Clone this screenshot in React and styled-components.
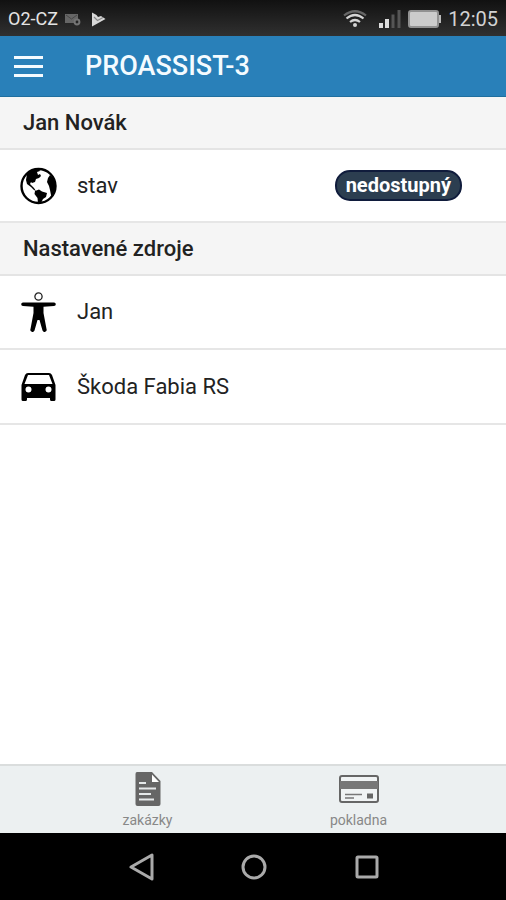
import React from "react";
import styled, { createGlobalStyle } from "styled-components";

const GlobalStyle = createGlobalStyle`
  *, *::before, *::after { box-sizing: border-box; }
  body { margin: 0; background: #fff; }
  h1, h2, ul { margin: 0; padding: 0; }
  button { border: 0; padding: 0; background: none; font: inherit; color: inherit; cursor: pointer; }
  svg { display: block; flex: none; }
`;

const Screen = styled.div`
  display: flex;
  flex-direction: column;
  min-height: 100vh;
  font-family: Roboto, "Noto Sans", sans-serif;
  color: #222;
`;

const StatusBar = styled.div`
  display: flex;
  align-items: center;
  justify-content: space-between;
  height: 36px;
  padding: 2px 8px 0;
  background: linear-gradient(#111, #303030);
  color: #d2d2d2;
`;

const StatusGroup = styled.div`
  display: flex;
  align-items: center;
  gap: ${(p) => p.$gap}px;
`;

const Carrier = styled.span`
  font-size: 18px;
  line-height: 20px;
  color: #e4e4e4;
`;

const Clock = styled.time`
  font-size: 20px;
  line-height: 20px;
`;

const Header = styled.header`
  display: flex;
  align-items: center;
  gap: 42px;
  height: 61px;
  padding: 0 14px;
  background: #2980b9;
  border-bottom: 1px solid #1f6f9f;
  color: #f4fbff;
`;

const MenuButton = styled.button`
  display: flex;
`;

const Title = styled.h1`
  font-size: 27px;
  line-height: 32px;
  font-weight: 500;
`;

const Content = styled.main`
  flex: 1;
`;

const SectionTitle = styled.h2`
  padding: 12px 23px 11px;
  border-bottom: 2px solid #e4e4e4;
  background: #f5f5f5;
  font-size: 22px;
  line-height: 28px;
  font-weight: 500;
`;

const List = styled.ul`
  list-style: none;
`;

const Row = styled.li`
  display: flex;
  align-items: center;
  gap: 20px;
  height: ${(p) => p.$height}px;
  padding: 0 44px 0 20px;
  border-bottom: 2px solid #e6e6e6;
  background: #fff;
`;

const RowLabel = styled.span`
  flex: 1;
  font-size: 22px;
  line-height: 28px;
`;

const Badge = styled.span`
  padding: 0 9px;
  border: 2px solid #101c3c;
  border-radius: 15px;
  background: #2c3e50;
  color: #fff;
  font-size: 20px;
  line-height: 27px;
  font-weight: 700;
`;

const TabBar = styled.nav`
  display: flex;
  height: 69px;
  padding: 0 42px;
  border-top: 2px solid #dadddd;
  background: #ecf0f1;
`;

const Tab = styled.button`
  display: flex;
  flex: 1;
  flex-direction: column;
  align-items: center;
  gap: 2px;
  padding-top: 4px;
  color: #666;
`;

const TabLabel = styled.span`
  font-size: 14px;
  line-height: 20px;
  color: #888;
`;

const SystemNav = styled.nav`
  display: flex;
  height: 67px;
  padding: 0 83px 0 86px;
  background: #000;
`;

const SystemButton = styled.button`
  display: flex;
  flex: 1;
  align-items: center;
  justify-content: center;
`;

const MailIcon = () => (
  <svg width="16" height="13" viewBox="0 0 16 13" aria-hidden="true">
    <path d="M0 1h13v5a4 4 0 0 0-4 4H0z" fill="#666" />
    <path d="M1 2l5.500 4L12 2" fill="none" stroke="#484848" />
    <circle cx="12" cy="9" r="2.400" fill="none" stroke="#747474" strokeWidth="2" />
  </svg>
);

const PlayCheckIcon = () => (
  <svg width="15" height="15" viewBox="0 0 15 15" aria-hidden="true">
    <path d="M1 .5L5.500 3 7 5l3-1 4.500 3L1 14.500z" fill="#d8d8d8" />
    <path d="M3 5l3.500 3.500L12 5.500" fill="none" stroke="#888" strokeWidth="1.200" />
  </svg>
);

const WifiIcon = () => (
  <svg width="24" height="18" viewBox="0 0 24 18" fill="none" strokeWidth="2.200" aria-hidden="true">
    <path d="M1 5.500Q12-3 23 5.500" stroke="#666" />
    <path d="M3.500 8.500Q12 1.500 20.500 8.500M7 12q5-4 10 0" stroke="#d4d4d4" />
    <circle cx="12" cy="15" r="2" fill="#d4d4d4" />
  </svg>
);

const SignalIcon = () => (
  <svg width="22" height="18" viewBox="0 0 22 18" aria-hidden="true">
    <path d="M0 13h4v5H0zM6 9h4v9H6z" fill="#dedede" />
    <path d="M12.500 4.500h3V18h-3zM18.500 0h3v18h-3z" fill="#555" />
  </svg>
);

const BatteryIcon = () => (
  <svg width="33" height="18" viewBox="0 0 33 18" aria-hidden="true">
    <rect x="1" y="1" width="29" height="16" rx="2" fill="#ccc" stroke="#929292" strokeWidth="2" />
    <path d="M31 5h2v8h-2z" fill="#bbb" />
  </svg>
);

const MenuIcon = () => (
  <svg width="29" height="21" viewBox="0 0 29 21" aria-hidden="true">
    <path d="M0 0h29v3H0zM0 9h29v3H0zM0 18h29v3H0z" fill="currentColor" />
  </svg>
);

const GlobeIcon = () => (
  <svg width="37" height="38" viewBox="0 0 37 38" aria-hidden="true">
    <circle cx="18.500" cy="19" r="17" fill="#fff" stroke="#000" strokeWidth="2.400" />
    <path d="M7 7C10 4 14 2 19 2l1 2-3 1 1 3 2-1 1 2-2 2-3 1-1 3-3 1-1-1-1 2 2 2 2 2 2 3-2-1-3-3-4-3-1-4z" />
    <path d="M30 8c5 4 7 10 5 17l-3 5-1-2-1-5-1-4-2-4 1-4z" />
    <path d="M15 24l4-1.500 3 2 5 1.500-1 4-3 2-2 4h-3l-.5-5-3-4z" />
  </svg>
);

const PersonIcon = () => (
  <svg width="37" height="40" viewBox="0 0 37 40" aria-hidden="true">
    <circle cx="18.500" cy="4.500" r="3.600" fill="none" stroke="#222" strokeWidth="1.300" />
    <path d="M3 10.500h31a1.800 1.800 0 0 1 0 3.600l-10.500.6V21l3 16a2 2 0 0 1-4 1.500L19.500 28h-2l-3 10.500a2 2 0 0 1-4-1.500l3-16v-6.300L3 14.100a1.800 1.800 0 0 1 0-3.600z" />
  </svg>
);

const CarIcon = () => (
  <svg width="37" height="32" viewBox="0 0 37 32" aria-hidden="true">
    <path
      fillRule="evenodd"
      d="M8 2h21q2 0 3 2l3.500 10v14.500q0 1.500-1.500 1.500h-2.500q-1.500 0-1.500-1.500V27H7v1.500Q7 30 5.500 30H3q-1.500 0-1.500-1.500V14L5 4q1-2 3-2zM8 4L4.500 13h28L29 4zM8.500 15.500a3 3 0 1 0 0 6 3 3 0 0 0 0-6zM28.500 15.500a3 3 0 1 0 0 6 3 3 0 0 0 0-6z"
    />
  </svg>
);

const DocumentIcon = () => (
  <svg width="26" height="38" viewBox="0 0 26 38" aria-hidden="true">
    <path d="M2 2h15l8.500 9v23q0 2-2 2h-21q-2 0-2-2V4q0-2 1.500-2z" fill="#666" />
    <path d="M17 4.500V12h7z" fill="#fff" />
    <path d="M4 13h7M4 18.500h17M4 24h12M4 29.500h15" stroke="#e5e8e9" strokeWidth="2" />
  </svg>
);

const CardIcon = () => (
  <svg width="40" height="38" viewBox="0 0 40 38" aria-hidden="true">
    <rect x="1" y="6" width="38" height="26" rx="2" fill="#f0f3f4" stroke="#666" strokeWidth="2" />
    <path d="M1 11h38v8H1z" fill="#777" />
    <path d="M6 24.500h17M6 28h9" stroke="#777" strokeWidth="1.500" />
    <path d="M28 23.500h6v5h-6z" fill="#666" />
  </svg>
);

const BackIcon = () => (
  <svg width="26" height="28" viewBox="0 0 26 28" fill="none" stroke="#aaa" strokeWidth="3" strokeLinejoin="round" aria-hidden="true">
    <path d="M23 2v24L2 14z" />
  </svg>
);

const HomeIcon = () => (
  <svg width="28" height="28" viewBox="0 0 28 28" fill="none" stroke="#aaa" strokeWidth="3" aria-hidden="true">
    <circle cx="14" cy="14" r="11" />
  </svg>
);

const RecentsIcon = () => (
  <svg width="24" height="24" viewBox="0 0 24 24" fill="none" stroke="#aaa" strokeWidth="3" aria-hidden="true">
    <rect x="2" y="2" width="20" height="20" rx="1" />
  </svg>
);

export default function App() {
  return (
    <Screen>
      <GlobalStyle />
      <StatusBar>
        <StatusGroup $gap={7}>
          <Carrier>O2-CZ</Carrier>
          <StatusGroup $gap={10}>
            <MailIcon />
            <PlayCheckIcon />
          </StatusGroup>
        </StatusGroup>
        <StatusGroup $gap={7}>
          <StatusGroup $gap={12}>
            <WifiIcon />
            <SignalIcon />
          </StatusGroup>
          <BatteryIcon />
          <Clock>12:05</Clock>
        </StatusGroup>
      </StatusBar>
      <Header>
        <MenuButton type="button" aria-label="Menu">
          <MenuIcon />
        </MenuButton>
        <Title>PROASSIST-3</Title>
      </Header>
      <Content>
        <SectionTitle>Jan Novák</SectionTitle>
        <List>
          <Row $height={73}>
            <GlobeIcon />
            <RowLabel>stav</RowLabel>
            <Badge>nedostupný</Badge>
          </Row>
        </List>
        <SectionTitle>Nastavené zdroje</SectionTitle>
        <List>
          <Row $height={74}>
            <PersonIcon />
            <RowLabel>Jan</RowLabel>
          </Row>
          <Row $height={75}>
            <CarIcon />
            <RowLabel>Škoda Fabia RS</RowLabel>
          </Row>
        </List>
      </Content>
      <TabBar>
        <Tab type="button">
          <DocumentIcon />
          <TabLabel>zakázky</TabLabel>
        </Tab>
        <Tab type="button">
          <CardIcon />
          <TabLabel>pokladna</TabLabel>
        </Tab>
      </TabBar>
      <SystemNav>
        <SystemButton type="button" aria-label="Zpět">
          <BackIcon />
        </SystemButton>
        <SystemButton type="button" aria-label="Domů">
          <HomeIcon />
        </SystemButton>
        <SystemButton type="button" aria-label="Poslední aplikace">
          <RecentsIcon />
        </SystemButton>
      </SystemNav>
    </Screen>
  );
}
